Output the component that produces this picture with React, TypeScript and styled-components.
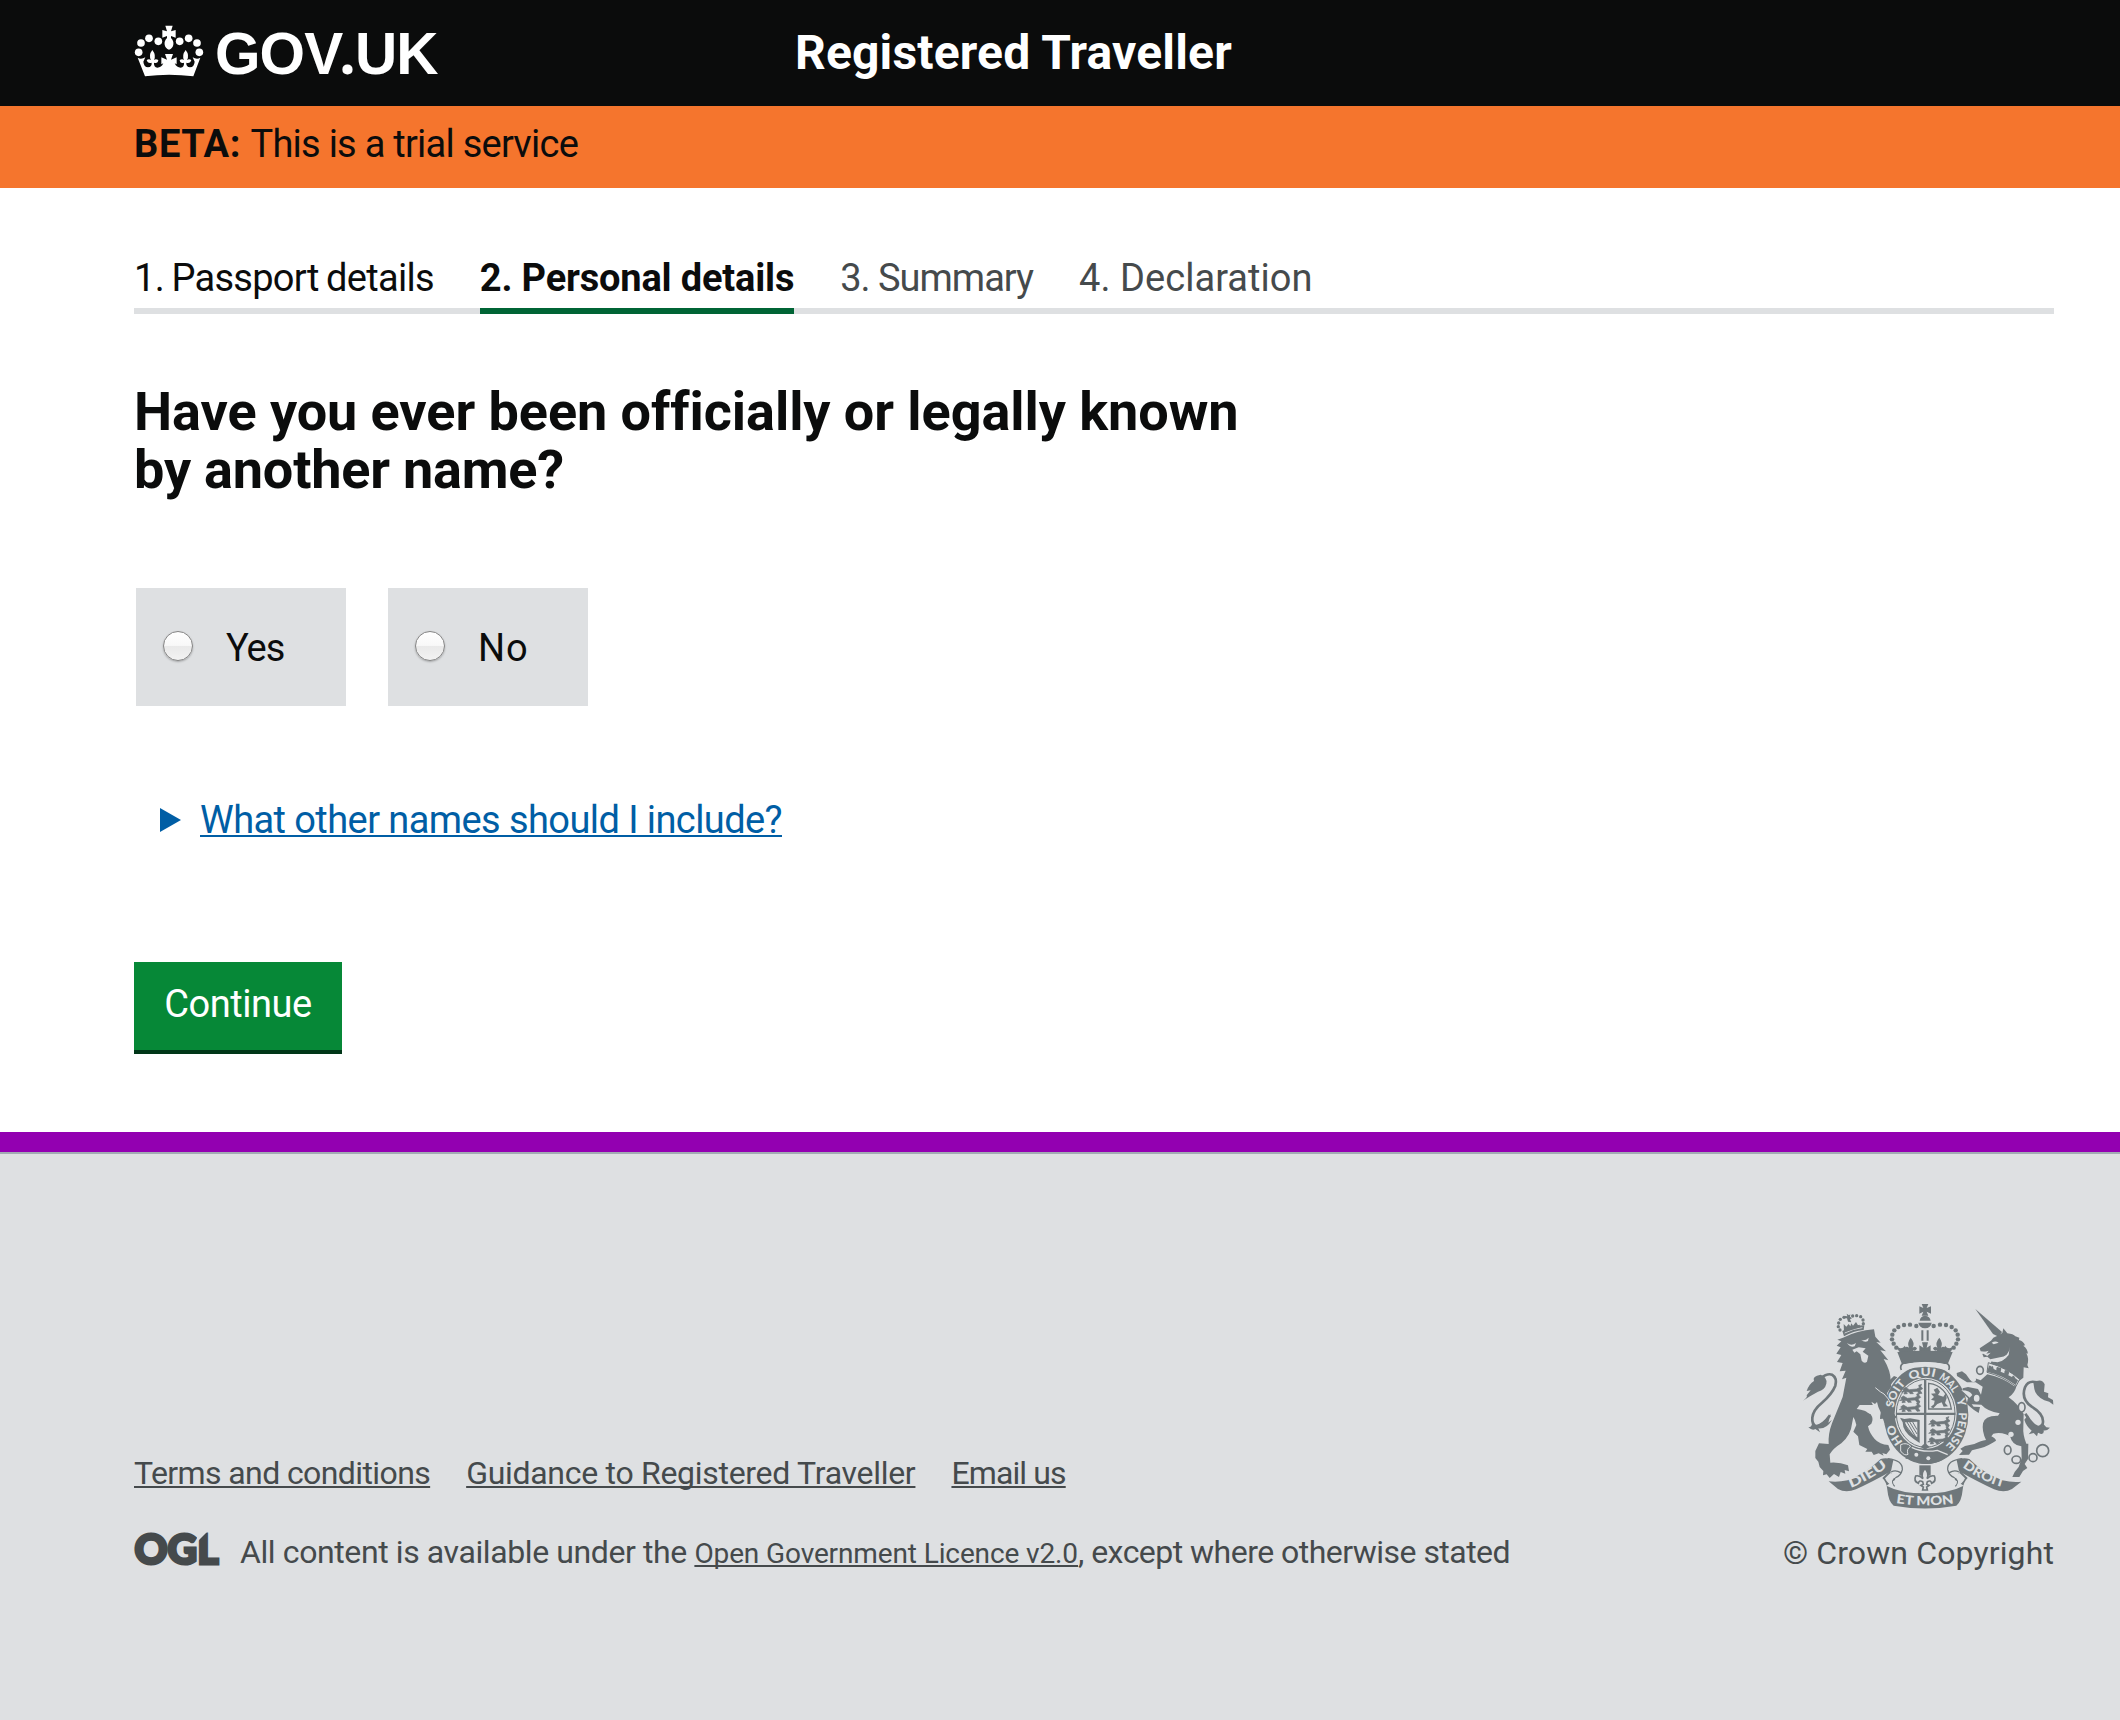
import React from 'react';
import styled, { createGlobalStyle } from 'styled-components';

const ink = '#0b0c0c';
const slate = '#454a4c';
const panel = '#dee0e2';
const crest = '#6f777b';

const Global = createGlobalStyle`
  *, *::before, *::after { box-sizing: border-box; }
  body {
    margin: 0;
    background: #fff;
    color: ${ink};
    font-family: Roboto, "Noto Sans", sans-serif;
    font-size: 38px;
    line-height: 50px;
    font-kerning: normal;
  }
`;

const Container = styled.div`
  width: 1920px;
  margin-left: 134px;
`;

const Tracked = styled.span<{ $track?: number }>`
  letter-spacing: ${(p) => p.$track ?? 0}px;
`;

/* Header */
const Header = styled.header`
  height: 106px;
  background: ${ink};
  color: #fff;
`;
const HeaderGrid = styled(Container)`
  display: grid;
  grid-template-columns: 661px 1fr;
`;
const Logo = styled.a`
  display: flex;
  align-items: flex-start;
  padding-top: 25px;
  gap: 11px;
  color: #fff;
  text-decoration: none;
`;
const Wordmark = styled.span`
  margin-top: -3px;
  font: 700 58.5px/56px "Liberation Sans", Arial, sans-serif;
  letter-spacing: -0.9px;
`;
const Dot = styled.span`
  margin-left: -3px;
  font-family: "Noto Sans", sans-serif;
  line-height: 1;
`;
const ServiceName = styled.div`
  padding-top: 23px;
  font-size: 48px;
  font-weight: 700;
  line-height: 60px;
  letter-spacing: 0.17px;
`;

/* Phase banner */
const Banner = styled.div`
  height: 82px;
  padding-top: 13px;
  background: #f5752d;
`;
const Phase = styled.strong`
  font-weight: 700;
  letter-spacing: 0.65px;
`;

/* Progress steps */
const Steps = styled.ol`
  display: flex;
  gap: 46px;
  height: 61px;
  margin: 65px 0 0;
  padding: 0;
  list-style: none;
  box-shadow: inset 0 -6px 0 ${panel};
`;
const Step = styled.li<{ $state: 'done' | 'current' | 'todo'; $track: number; $word?: number }>`
  height: 61px;
  letter-spacing: ${(p) => p.$track}px;
  word-spacing: ${(p) => p.$word ?? 0}px;
  font-weight: ${(p) => (p.$state === 'current' ? 700 : 400)};
  color: ${(p) => (p.$state === 'todo' ? slate : ink)};
  border-bottom: 6px solid ${(p) => (p.$state === 'current' ? '#006435' : 'transparent')};
`;

/* Question */
const Heading = styled.h1`
  width: 1200px;
  margin: 69px 0 0;
  font-size: 54px;
  font-weight: 700;
  line-height: 58px;
  letter-spacing: -0.06px;
  font-variant-ligatures: none;
`;
const Choices = styled.div`
  display: flex;
  gap: 42px;
  margin: 89px 0 0 2px;
`;
const Choice = styled.label<{ $width: number }>`
  display: flex;
  align-items: center;
  width: ${(p) => p.$width}px;
  height: 118px;
  padding-left: 27px;
  gap: 33px;
  background: ${panel};
`;
const ChoiceText = styled(Tracked)`
  padding-top: 2px;
`;
const Radio = styled.input`
  appearance: none;
  flex: none;
  width: 30px;
  height: 30px;
  margin: -2px 0 0;
  border: 1.5px solid #858585;
  border-radius: 50%;
  background: linear-gradient(#fff 0%, #f8f8f8 48%, #e9e9e9 52%, #f3f3f3 100%);
  box-shadow: 0 1px 2px rgba(0, 0, 0, 0.25);
`;

const Details = styled.div`
  display: flex;
  align-items: center;
  margin: 89px 0 0 26px;
  gap: 19px;
  color: #005ea5;
`;
const Arrow = styled.span`
  width: 0;
  height: 0;
  border-style: solid;
  border-width: 12.5px 0 12.5px 21px;
  border-color: transparent transparent transparent #005ea5;
`;
const Underlined = styled.a<{ $track: number; $size?: number }>`
  color: inherit;
  font-size: ${(p) => (p.$size ? `${p.$size}px` : 'inherit')};
  letter-spacing: ${(p) => p.$track}px;
  text-decoration: underline;
  text-decoration-thickness: 2px;
  text-decoration-skip-ink: none;
  text-underline-offset: 2px;
`;

const Continue = styled.button`
  display: block;
  width: 208px;
  height: 92px;
  margin: 117px 0 0;
  padding: 17px 0 21px;
  border: 0;
  border-bottom: 4px solid #003618;
  background: #068837;
  color: #fff;
  font: inherit;
  letter-spacing: -0.45px;
  text-align: center;
`;

/* Footer */
const Footer = styled.footer`
  height: 588px;
  margin-top: 78px;
  padding-top: 151px;
  border-top: 20px solid #9300b1;
  background: ${panel};
  box-shadow: inset 0 2px 0 #a1acb2;
  color: ${slate};
  font-size: 32px;
  line-height: 40px;
`;
const FooterRow = styled(Container)`
  display: flex;
  justify-content: space-between;
  align-items: flex-end;
`;
const FooterLinks = styled.nav`
  display: flex;
  gap: 36px;
  margin-bottom: 39px;
`;
const Licence = styled.div`
  display: flex;
  align-items: flex-start;
  height: 41px;
  gap: 20px;
  white-space: pre;
`;
const Copyright = styled.div`
  display: flex;
  flex-direction: column;
  align-items: flex-end;
  gap: 23px;
`;

function CrownLogo() {
  return (
    <svg width="70" height="53" viewBox="42 45 210 159" fill="#fff">
      {[[56, 127], [63, 99], [87, 85], [115, 94], [238, 127], [231, 99], [206, 85], [179, 94]].map(([x, y]) => (
        <circle key={`${x}-${y}`} cx={x} cy={y} r="11.5" />
      ))}
      <path d="M136 47H158L153 64L167 60V83L153 78V84Q162 93 160 104Q158 115 147 119Q136 115 134 104Q132 93 141 84V78L127 83V60L141 64Z" />
      <path d="M53 143Q63 150 76 142L70 155Q72 172 84 172Q96 171 95 158Q83 161 80 150Q88 145 93 151Q85 135 97 120Q109 135 102 151Q106 145 115 150Q114 161 102 158Q101 171 112 173Q124 173 130 160L124 163V142L141 149L135 132H159L153 149L170 142V163L164 160Q170 173 182 173Q193 171 192 158Q180 161 179 150Q188 145 192 151Q185 135 197 120Q209 135 201 151Q206 145 214 150Q211 161 199 158Q198 171 210 172Q222 172 224 155L218 142Q231 150 241 143L220 199Q147 190 75 199Z" />
    </svg>
  );
}

function OglLogo() {
  return (
    <svg width="86" height="36" viewBox="0 0 86 36" overflow="visible">
      <text
        x="0.5" y="31.6" textLength="84" lengthAdjust="spacingAndGlyphs"
        fontFamily="Lato, sans-serif" fontWeight="900" fontSize="42.5"
        fill={slate} stroke={slate} strokeWidth="3"
      >
        OGL
      </text>
      <path d="M63 -2H75L63 10Z" fill={panel} />
    </svg>
  );
}

const crownBeads = [[411, 107], [392, 103], [374, 104], [357, 110], [345, 120], [339, 133], [338, 147], [343, 160], [351, 172]];

function CrownHalf() {
  return (
    <g>
      {crownBeads.map(([x, y]) => <circle key={x + y * 1000} cx={x} cy={y} r="6.6" />)}
      <path d="M394 142Q408 158 400 172Q408 166 413 174Q410 184 401 180Q403 190 415 189L420 186V165L432 172L428 156H437.5V197L372 200L357 180L352 168Q366 180 377 166Q380 182 388 181Q378 184 376 173Q382 166 389 172Q382 158 394 142Z" />
    </g>
  );
}

/* One heraldic lion passant, used in the quarters of the shield. */
function Passant({ x, y }: { x: number; y: number }) {
  return (
    <path
      transform={`translate(${x} ${y})`}
      d="M0 6L8 0L15 4L20 7L42 5L50 1L48 -6L57 -9L54 -3L60 4L52 9L58 18L49 19L44 12L28 13L32 19L22 19L19 14L11 13L14 19L4 20L6 13L-4 14L4 9Z"
      stroke={crest}
      strokeWidth="2"
    />
  );
}

/* word, baseline on the garter, drawn length */
const garterWords: [string, string, number][] = [
  ['HO', 'M371 455A98 116 0 0 1 344 398', 60],
  ['SOIT', 'M343 353A98 116 0 0 1 382 279', 82],
  ['QUI', 'M394 271A98 116 0 0 1 470 262', 75],
  ['MAL', 'M477 266A98 116 0 0 1 522 311', 62],
  ['Y', 'M531 328A98 116 0 0 1 538 356', 23],
  ['PENSE', 'M538 366A98 116 0 0 1 494 470', 112],
];

function RoyalArms() {
  return (
    <svg width="251" height="207" viewBox="71 38 753 621" fill={crest} stroke="none" role="img">
      <defs>
        {garterWords.map(([word, d]) => <path key={word} id={`garter-${word}`} d={d} />)}
        <path id="scrollLeft" d="M214 592Q266 574 326 527" />
        <path id="scrollMid" d="M350 638Q437 652 527 638" />
        <path id="scrollRight" d="M549 530Q610 576 684 594" />
      </defs>

      {/* Imperial crown */}
      <path d="M427 41H447L442 53L455 48V70L442 64L447 76H427L432 64L420 70V48L432 53Z" />
      <path d="M421 91Q423 77 437 76Q452 77 454 91ZM417 97H457Q455 113 437 114Q420 113 417 97Z" />
      <path d="M426 120H432V151H426ZM442 120H448V151H442Z" />
      <CrownHalf />
      <g transform="matrix(-1 0 0 1 874 0)"><CrownHalf /></g>
      <path d="M354 185Q437 177 520 185L505 222Q437 207 368 222Z" />
      <path d="M372 219Q437 205 502 219Q514 226 508 239M372 219Q360 226 366 239" fill="none" stroke={crest} strokeWidth="5" />

      {/* Garter */}
      <ellipse cx="440" cy="373" rx="127" ry="148" />
      <path d="M374 222Q437 209 500 222Q512 230 500 240Q437 218 375 240Q362 232 374 222Z" fill={panel} />
      <ellipse cx="439" cy="369" rx="93" ry="107" fill={panel} />
      <ellipse cx="439" cy="369" rx="88" ry="102" fill="none" stroke={crest} strokeWidth="3" />
      <path d="M434 268H441V470H434ZM350 367H528V374H350Z" />
      <Passant x={370} y={291} />
      <Passant x={364} y={317} />
      <Passant x={364} y={344} />
      <Passant x={452} y={388} />
      <Passant x={452} y={415} />
      <Passant x={449} y={441} />
      <path d="M448 279Q504 285 516 356H448Z" fill="none" stroke={crest} strokeWidth="4" />
      <path d="M463 298L474 292L482 304L476 314L492 319L499 309L502 323L497 338L506 348L493 349L487 336L474 341L462 354L454 350L464 342L466 331L455 328L464 320L455 310L469 309Z" />
      <path d="M362 382L375 386L392 384L421 389V458L404 447Q370 425 370 396Z" />
      <path d="M377 396L414 394V441Q383 424 377 396Z" fill={panel} />
      <path d="M383 395L408 438M391 395L413 431M400 395L413 418M376 401L400 433" stroke={crest} strokeWidth="3" />
      <path d="M424 470L437 458L451 470L437 478Z" />
      <path d="M360 482Q356 458 373 457L391 465Q432 483 472 474L515 486L498 503Q463 527 417 519L392 504L378 506Q386 496 372 491Z" />
      <path d="M364 463Q382 455 394 468Q380 476 386 492Q375 498 364 482Z" fill={crest} stroke={panel} strokeWidth="3" />
      <path d="M397 471Q432 488 474 480L505 493" fill="none" stroke={panel} strokeWidth="4" />
      <circle cx="411" cy="493" r="6" fill={panel} />
      <circle cx="447" cy="504" r="6" fill={panel} />
      <path d="M310 318Q315 280 344 257L354 261Q325 287 321 320Z" />

      {/* Lion */}
      <path d="M172 166L186 153L174 148L191 142Q233 121 284 117L288 139L304 157L291 155L320 183L303 180L327 210L313 206Q335 243 334 273L336 289L321 310L341 342L343 371L352 380L340 392L331 385L334 401L322 392L315 398L311 385L302 386L303 368L297 357L287 356L284 344L241 344L232 356Q258 359 274 372Q284 386 276 400L266 408Q270 428 286 446Q301 463 327 464L332 478L321 492L309 488L313 496L298 489L283 494L277 484L258 484L264 476L240 464L236 438L222 424L231 404Q228 388 222 380L218 400Q215 433 186 459Q162 474 151 492L153 517Q181 515 206 525L209 543L196 539L198 550L184 545L179 560L164 551L151 563L142 552L131 555L132 542L121 530L117 514L108 503L108 482L119 459L148 461Q146 431 158 399L190 320L201 262L188 267L199 241L181 243L190 218L173 215L186 194L171 190L184 171Z" />
      <path d="M203 158Q216 168 230 158L226 168Q212 172 203 158ZM245 148Q257 153 268 142L266 152Q256 158 245 148ZM219 178L238 171L259 174L250 184L267 196L263 214Q255 221 247 211L243 192L232 183L225 187Z" fill={panel} />
      <path d="M246 344Q262 351 281 345L276 334L287 341L293 335L297 350L304 366L302 377L286 369Q274 375 261 364L266 358Q252 356 246 344Z" fill={panel} />
      <path d="M288 292Q305 307 314 311Q329 325 336 343" fill="none" stroke={panel} strokeWidth="3" />
      <path d="M123 264Q144 248 158 253Q174 263 168 286Q158 311 128 337Q101 359 99 382Q97 402 110 408Q131 405 152 375" fill="none" stroke={crest} strokeWidth="8" />
      <path d="M71 331Q86 321 82 315L94 300L82 302Q89 281 104 272Q98 257 124 253Q145 261 141 280Q137 298 116 304L92 318ZM87 411Q99 409 98 397Q107 411 125 399Q143 388 154 371L147 397L158 388Q143 416 117 414L122 426L108 416Q99 422 87 411Z" />

      {/* Lion's crown */}
      <path d="M189 122Q223 105 255 105L253 119Q221 122 194 138Z" />
      <path d="M196 128Q222 115 249 112" stroke={panel} strokeWidth="2.5" fill="none" />
      {[[178, 98], [183, 87], [194, 81], [177, 109], [182, 119], [220, 77], [232, 76], [244, 79], [251, 89], [252, 100]].map(([x, y]) => (
        <circle key={x} cx={x} cy={y} r="5" />
      ))}
      <path d="M202 70L209 75L213 72L212 79L218 84L212 87L216 96L206 94L203 84L196 84L197 77L204 78ZM193 101L201 109L208 101L213 108L216 99L221 106L230 95L236 105L241 103L242 111L194 126Z" />

      {/* Unicorn */}
      <path d="M588 56L668 125L658 139L641 131Z" />
      <path d="M653 137L669 128L672 114L684 129Q702 131 708 138L720 142L719 149Q733 153 737 165L732 166Q746 176 745 190L741 189Q750 205 744 224L748 234L733 231L732 262L720 271Q672 232 632 222L637 213L654 216Q684 211 691 178Q687 197 662 201L633 207L624 199L613 201L609 191L619 184L604 183L601 174L635 151L642 142Z" />
      <path d="M637 157Q648 150 658 157L643 162ZM606 187L628 181L621 190L634 187L624 197Z" fill={panel} />
      <path d="M691 169Q691 198 656 207L636 214Q672 216 688 194Z" fill={panel} />
      <path d="M627 217Q684 233 721 267L710 288Q668 257 623 246Z" fill={panel} stroke={crest} strokeWidth="3" />
      <path d="M627 233Q629 221 636 229Q641 222 643 236L651 240Q650 225 660 232Q669 229 664 244L675 249Q675 234 685 242Q692 242 687 255L698 260Q702 249 708 264L716 270L709 284Q667 253 623 244Z" />
      <path d="M624 252Q671 262 705 288L712 285Q707 309 688 321Q716 341 733 371L732 410Q730 433 741 460H747L746 506L736 521L744 533L731 542L720 560H699L706 545L718 530L727 504L726 468Q698 465 692 437L679 432Q661 425 642 430L636 438Q648 443 650 451Q624 468 605 473L578 480L569 493L539 494L550 482L543 475L557 467L585 461Q606 451 620 449Q607 423 611 399Q616 375 656 376L661 369Q623 362 606 343L577 342L583 349L602 350L598 368L584 359L573 350L562 340L566 324L551 309L550 294L566 290L596 296L605 313L610 289L589 276L563 276L551 268L533 257L532 248L548 243L560 252L573 270L587 264L604 270Z" />
      <path d="M546 300Q573 300 579 314L571 322L553 306Z" fill={panel} />
      {[[602, 240, 10, 12], [592, 324, 11, 13], [727, 351, 10, 14], [685, 479, 10, 13], [711, 508, 13, 11], [761, 502, 12, 12], [790, 481, 18, 18]].map(([x, y, a, b]) => (
        <ellipse key={x} cx={x} cy={y} rx={a} ry={b} fill={panel} stroke={crest} strokeWidth="5" />
      ))}
      {[[716, 396], [695, 432], [582, 267]].map(([x, y]) => <circle key={x} cx={x} cy={y} r="8" fill={panel} />)}
      <path d="M772 276Q746 269 737 291Q724 326 757 349Q797 373 790 401Q777 423 752 391L738 370" fill="none" stroke={crest} strokeWidth="8" />
      <path d="M762 276Q788 262 796 282L794 304L807 309L806 321L821 329L822 343Q811 333 795 330Q768 316 765 296ZM746 375Q755 400 772 410Q788 416 792 401L801 411L812 412Q801 423 793 420Q795 432 785 431L776 427L773 438L763 428L748 432L757 421Q740 406 735 388Z" />

      {/* Garter motto */}
      <g fill={panel} fontFamily="Lato, sans-serif" fontWeight="900" fontSize="34">
        {garterWords.map(([word, , length]) => (
          <text key={word}>
            <textPath href={`#garter-${word}`} textLength={length} lengthAdjust="spacingAndGlyphs">{word}</textPath>
          </text>
        ))}
      </g>

      {/* Fleur-de-lis pendant */}
      <path d="M420 525H454V556H420Z" />
      <path
        d="M437 535Q451 548 443 565Q454 554 465 557Q472 572 457 579Q454 568 444 574L442 582L449 585L442 590L444 599H430L432 590L425 585L432 582L430 574Q420 568 417 579Q402 572 409 557Q420 554 431 565Q423 548 437 535Z"
        fill={panel} stroke={crest} strokeWidth="5"
      />

      {/* Motto scroll */}
      <path d="M148 573Q173 577 205 570Q260 549 304 506Q323 500 342 509L335 543Q275 577 230 597Q199 609 176 596Z" />
      <path d="M726 574Q699 577 669 570Q613 549 570 506Q551 500 532 509L539 543Q600 577 644 597Q675 609 698 596Z" />
      <path d="M325 505Q371 510 369 538Q365 556 349 562Q330 571 346 588M335 545Q349 537 364 547M549 505Q503 510 505 538Q509 556 525 562Q544 571 528 588M539 545Q525 537 510 547" fill="none" stroke={crest} strokeWidth="4" />
      <path d="M331 542L309 563Q322 575 324 598Q327 633 343 646Q437 663 531 646Q547 633 550 598Q552 575 565 563L543 542L526 568L553 586Q510 609 437 609Q364 609 321 586L348 568Z" />
      <path d="M333 548L317 564Q324 580 342 588Q331 568 350 559ZM541 548L557 564Q550 580 532 588Q543 568 524 559Z" fill={panel} />
      <g fill={panel} fontFamily="Lato, sans-serif" fontWeight="900" fontSize="38">
        <text><textPath href="#scrollLeft" textLength="128" lengthAdjust="spacingAndGlyphs">DIEU</textPath></text>
        <text><textPath href="#scrollMid" textLength="174" lengthAdjust="spacingAndGlyphs">ET MON</textPath></text>
        <text><textPath href="#scrollRight" textLength="138" lengthAdjust="spacingAndGlyphs">DROIT</textPath></text>
      </g>
    </svg>
  );
}

export default function App() {
  return (
    <>
      <Global />
      <Header>
        <HeaderGrid>
          <Logo>
            <CrownLogo />
            <Wordmark>GOV<Dot>.</Dot>UK</Wordmark>
          </Logo>
          <ServiceName>Registered Traveller</ServiceName>
        </HeaderGrid>
      </Header>
      <Banner>
        <Container>
          <Phase>BETA:</Phase> <Tracked $track={-0.75}>This is a trial service</Tracked>
        </Container>
      </Banner>

      <Container as="main">
        <Steps>
          <Step $state="done" $track={-0.72} $word={-1.2}>1. Passport details</Step>
          <Step $state="current" $track={-0.18}>2. Personal details</Step>
          <Step $state="todo" $track={-1}>3. Summary</Step>
          <Step $state="todo" $track={0.05}>4. Declaration</Step>
        </Steps>
        <Heading>
          Have you ever been officially or legally known
          <br />
          <Tracked $track={-0.2}>by another name?</Tracked>
        </Heading>
        <Choices>
          <Choice $width={210}>
            <Radio type="radio" name="other-name" />
            <ChoiceText $track={-1}>Yes</ChoiceText>
          </Choice>
          <Choice $width={200}>
            <Radio type="radio" name="other-name" />
            <ChoiceText $track={1}>No</ChoiceText>
          </Choice>
        </Choices>
        <Details>
          <Arrow />
          <Underlined $track={-0.58}>What other names should I include?</Underlined>
        </Details>
        <Continue type="button">Continue</Continue>
      </Container>

      <Footer>
        <FooterRow>
          <div>
            <FooterLinks>
              <Underlined $track={-0.6}>Terms and conditions</Underlined>
              <Underlined $track={-0.29}>Guidance to Registered Traveller</Underlined>
              <Underlined $track={-0.88}>Email us</Underlined>
            </FooterLinks>
            <Licence>
              <OglLogo />
              <span>
                <Tracked $track={-0.4}>{'All content is available under the '}</Tracked>
                <Underlined $track={-0.12} $size={28}>Open Government Licence v2.0</Underlined>
                <Tracked $track={-0.53}>, except where otherwise stated</Tracked>
              </span>
            </Licence>
          </div>
          <Copyright>
            <RoyalArms />
            <Tracked $track={0.12}>© Crown Copyright</Tracked>
          </Copyright>
        </FooterRow>
      </Footer>
    </>
  );
}
